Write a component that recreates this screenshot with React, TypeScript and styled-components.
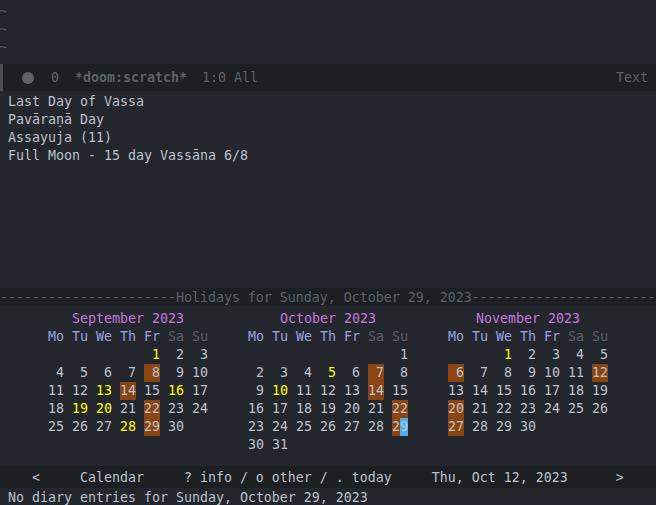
import React from "react";
import styled, { createGlobalStyle } from "styled-components";

const C = {
  bg: "#23262d",
  modeBg: "#1c1f24",
  fg: "#bbc2cf",
  grey: "#5b6268",
  dim: "#50555c",
  violet: "#c678dd",
  lavender: "#9da2e6",
  yellow: "#ffff00",
  brown: "#8b4513",
  blue: "#51afef",
};

const Global = createGlobalStyle`
  html, body { margin: 0; padding: 0; background: ${C.bg}; }
  body { font-family: "DejaVu Sans Mono", "Liberation Mono", monospace; font-size: 13.29px; line-height: 18px; color: ${C.fg}; }
`;

const Frame = styled.div`
  width: 656px;
  height: 505px;
  overflow: hidden;
  display: flex;
  flex-direction: column;
  background: ${C.bg};
`;

const TopWindow = styled.div`
  height: 62px;
  padding-top: 2px;
  overflow: hidden;
  display: flex;
  flex-direction: column;
`;

const Tilde = styled.div`
  height: 18px;
  flex: none;
  font-size: 14px;
  line-height: 18px;
  color: ${C.dim};
  margin-left: -1px;
`;

const ScratchModeLine = styled.div`
  height: 27px;
  flex: none;
  display: flex;
  align-items: center;
  background: ${C.modeBg};
  color: ${C.grey};
  white-space: pre;
`;

const Bar = styled.div`
  width: 3px;
  align-self: stretch;
  background: #4b5057;
`;

const Dot = styled.div`
  width: 12px;
  height: 12px;
  border-radius: 50%;
  background: ${C.grey};
  margin-left: 19px;
`;

const ModeItem = styled.span<{ $ml: number; $bold?: boolean }>`
  margin-left: ${(p) => p.$ml}px;
  font-weight: ${(p) => (p.$bold ? "bold" : "normal")};
`;

const Spacer = styled.div`
  flex: 1;
`;

const ModeRight = styled.span`
  margin-right: 8px;
`;

const HolidaysWindow = styled.div`
  height: 195px;
  padding-top: 2px;
  flex: none;
  padding-left: 8px;
  white-space: pre;
`;

const Line = styled.div`
  height: 18px;
`;

const SepModeLine = styled.div`
  height: 17px;
  padding-top: 1px;
  flex: none;
  background: ${C.modeBg};
  color: ${C.grey};
  white-space: pre;
  overflow: hidden;
`;

const CalendarWindow = styled.div`
  height: 156px;
  padding-top: 4px;
  flex: none;
  display: flex;
  gap: 40px;
  padding-left: 48px;
`;

const Month = styled.div`
  width: 160px;
  display: flex;
  flex-direction: column;
`;

const MonthHeader = styled.div`
  height: 18px;
  text-align: center;
  color: ${C.violet};
  white-space: pre;
`;

const DayGrid = styled.div`
  display: grid;
  grid-template-columns: repeat(7, 16px);
  column-gap: 8px;
  grid-auto-rows: 18px;
`;

const DayName = styled.div<{ $weekend?: boolean }>`
  color: ${(p) => (p.$weekend ? C.grey : C.lavender)};
  white-space: pre;
`;

const Cell = styled.div<{ $kind?: "hol" | "diary" }>`
  text-align: right;
  white-space: pre;
  background: ${(p) => (p.$kind === "hol" ? C.brown : "transparent")};
  color: ${(p) => (p.$kind === "diary" ? C.yellow : C.fg)};
`;

const Half = styled.span<{ $bg: string }>`
  display: inline-block;
  width: 8px;
  text-align: center;
  background: ${(p) => p.$bg};
`;

const CalModeLine = styled.div`
  height: 20px;
  flex: none;
  display: flex;
  align-items: center;
  padding-top: 2px;
  background: ${C.modeBg};
  color: ${C.fg};
  white-space: pre;
`;

const Echo = styled.div`
  height: 16px;
  flex: none;
  padding-left: 8px;
  padding-top: 1px;
  white-space: pre;
  line-height: 18px;
`;

type MonthData = {
  name: string;
  offset: number;
  days: number;
  hol: number[];
  diary: number[];
  today?: number;
};

const months: MonthData[] = [
  { name: "September 2023", offset: 4, days: 30, hol: [8, 14, 22, 29], diary: [1, 13, 16, 19, 20, 28] },
  { name: "October 2023", offset: 6, days: 31, hol: [7, 14, 22], diary: [5, 10], today: 29 },
  { name: "November 2023", offset: 2, days: 30, hol: [6, 12, 20, 27], diary: [1] },
];

const dayNames = ["Mo", "Tu", "We", "Th", "Fr", "Sa", "Su"];

function MonthView({ m }: { m: MonthData }) {
  const cells: React.ReactNode[] = [];
  for (let i = 0; i < m.offset; i++) cells.push(<Cell key={"e" + i} />);
  for (let d = 1; d <= m.days; d++) {
    if (m.today === d) {
      const s = String(d);
      cells.push(
        <Cell key={d}>
          <Half $bg={C.brown}>{s[0]}</Half>
          <Half $bg={C.blue}>{s[1]}</Half>
        </Cell>
      );
      continue;
    }
    const kind = m.hol.includes(d) ? "hol" : m.diary.includes(d) ? "diary" : undefined;
    cells.push(
      <Cell key={d} $kind={kind}>
        {String(d).padStart(2, " ")}
      </Cell>
    );
  }
  return (
    <Month>
      <MonthHeader>{m.name}</MonthHeader>
      <DayGrid>
        {dayNames.map((n, i) => (
          <DayName key={n} $weekend={i >= 5}>
            {n}
          </DayName>
        ))}
        {cells}
      </DayGrid>
    </Month>
  );
}

export default function App() {
  const sep =
    "-".repeat(22) + "Holidays for Sunday, October 29, 2023" + "-".repeat(23);
  return (
    <>
      <Global />
      <Frame>
        <TopWindow>
          <Tilde>~</Tilde>
          <Tilde>~</Tilde>
          <Tilde>~</Tilde>
          <Tilde>~</Tilde>
        </TopWindow>
        <ScratchModeLine>
          <Bar />
          <Dot />
          <ModeItem $ml={17}>0</ModeItem>
          <ModeItem $ml={16} $bold>
            *doom:scratch*
          </ModeItem>
          <ModeItem $ml={15}>1:0 All</ModeItem>
          <Spacer />
          <ModeRight>Text</ModeRight>
        </ScratchModeLine>
        <HolidaysWindow>
          <Line>Last Day of Vassa</Line>
          <Line>Pavāraṇā Day</Line>
          <Line>Assayuja (11)</Line>
          <Line>Full Moon - 15 day Vassāna 6/8</Line>
        </HolidaysWindow>
        <SepModeLine>{sep}</SepModeLine>
        <CalendarWindow>
          {months.map((m) => (
            <MonthView key={m.name} m={m} />
          ))}
        </CalendarWindow>
        <CalModeLine>
          {"    <     Calendar     ? info / o other / . today     Thu, Oct 12, 2023      >"}
        </CalModeLine>
        <Echo>No diary entries for Sunday, October 29, 2023</Echo>
      </Frame>
    </>
  );
}
